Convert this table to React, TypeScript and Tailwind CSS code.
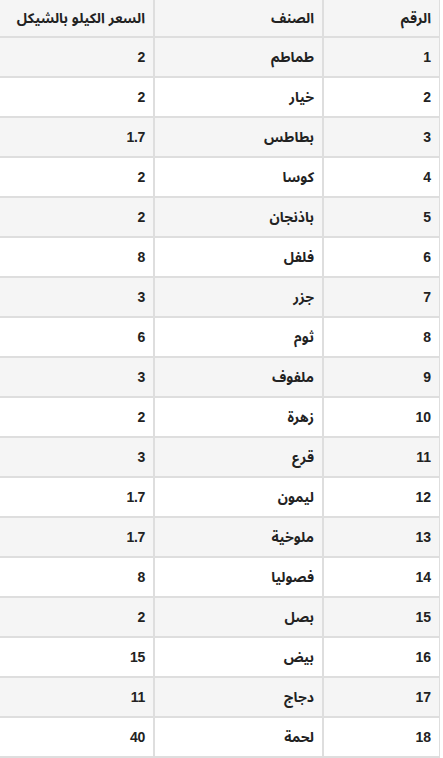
import React from "react";

const rows: [string, string, string][] = [
  ["1", "طماطم", "2"],
  ["2", "خيار", "2"],
  ["3", "بطاطس", "1.7"],
  ["4", "كوسا", "2"],
  ["5", "باذنجان", "2"],
  ["6", "فلفل", "8"],
  ["7", "جزر", "3"],
  ["8", "ثوم", "6"],
  ["9", "ملفوف", "3"],
  ["10", "زهرة", "2"],
  ["11", "قرع", "3"],
  ["12", "ليمون", "1.7"],
  ["13", "ملوخية", "1.7"],
  ["14", "فصوليا", "8"],
  ["15", "بصل", "2"],
  ["16", "بيض", "15"],
  ["17", "دجاج", "11"],
  ["18", "لحمة", "40"],
];

function Row({ cells, striped, header }: { cells: string[]; striped: boolean; header?: boolean }) {
  return (
    <div
      className={`flex border-b-2 border-[#dedede] ${header ? "h-[38px]" : "h-[40px]"} ${
        striped ? "bg-[#f5f5f5]" : "bg-white"
      }`}
    >
      <div className="w-[117px] flex items-center pr-2 border-l-2 border-[#dedede]">{cells[0]}</div>
      <div className="w-[169px] flex items-center pr-2 border-l-2 border-[#dedede]">{cells[1]}</div>
      <div className="w-[153px] flex items-center pr-2 whitespace-nowrap tracking-[-0.3px]">{cells[2]}</div>
    </div>
  );
}

export default function App() {
  return (
    <div className="w-[443px] h-[758px] overflow-hidden bg-white">
      <div
        dir="rtl"
        className="w-[440px] border-r border-[#dedede] text-[14px] font-bold text-[#222]"
        style={{ fontFamily: '"Liberation Sans", "Noto Sans Arabic", "DejaVu Sans", sans-serif' }}
      >
        <Row header striped cells={["الرقم", "الصنف", "السعر الكيلو بالشيكل"]} />
        {rows.map((r, i) => (
          <Row key={r[0]} cells={r} striped={i % 2 === 0} />
        ))}
      </div>
    </div>
  );
}
